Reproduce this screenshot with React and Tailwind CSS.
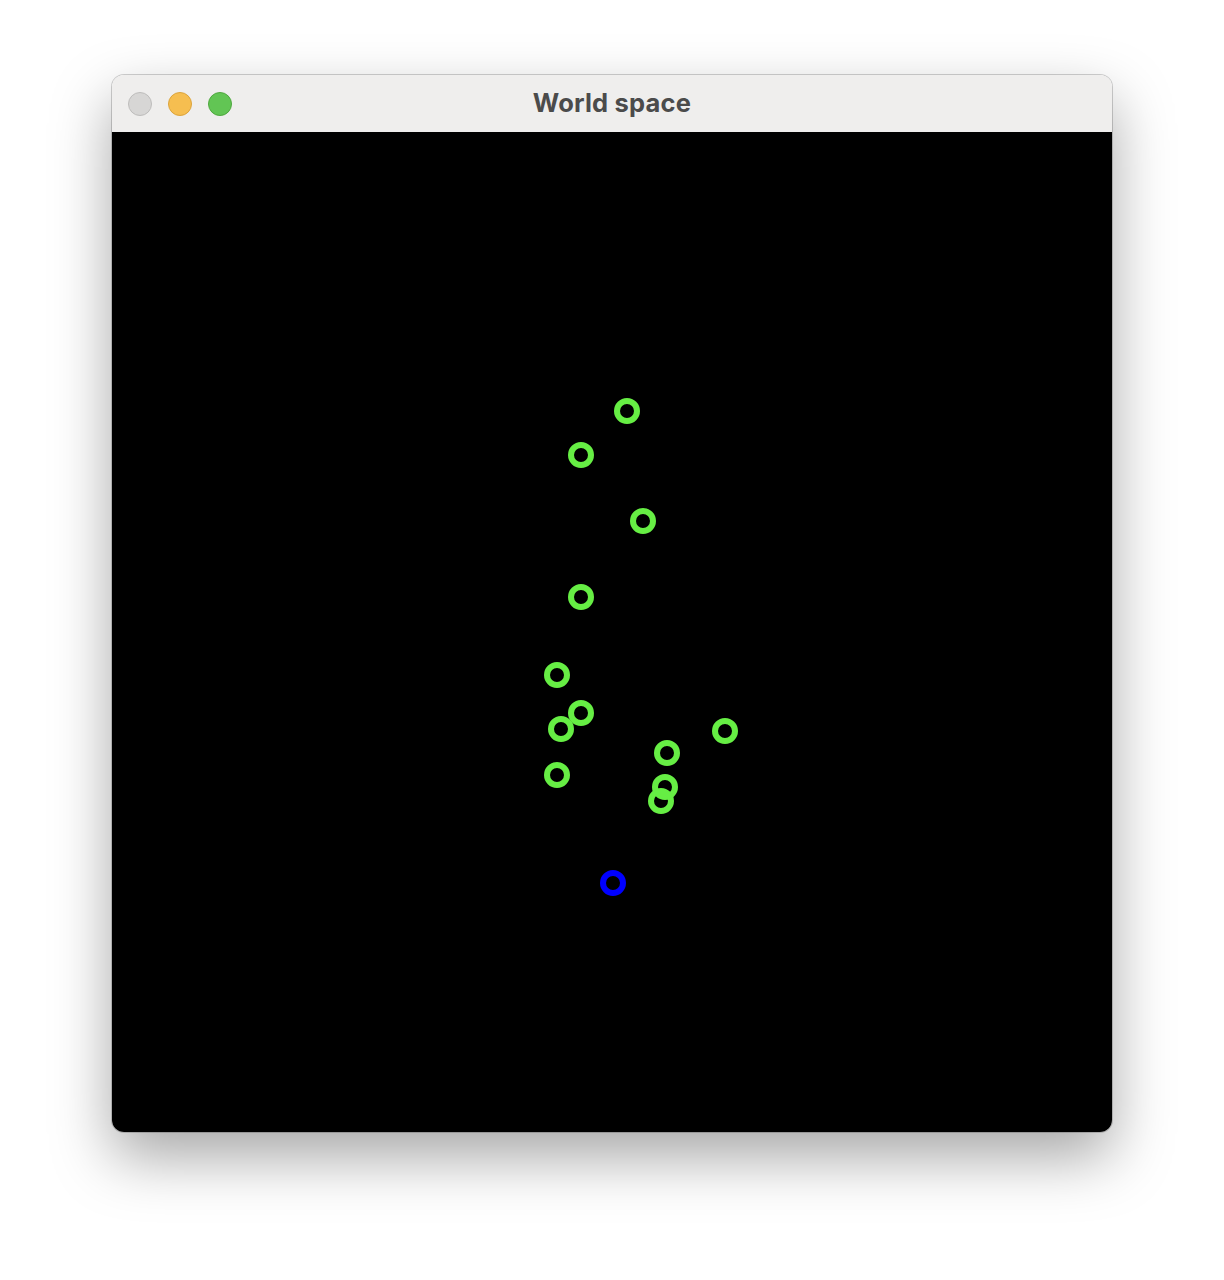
const points = [
  [515, 279],
  [469, 323],
  [531, 389],
  [469, 465],
  [445, 543],
  [469, 581],
  [449, 597],
  [613, 599],
  [555, 621],
  [445, 643],
  [553, 655],
  [549, 669],
];

const player = [501, 751];

const Ring = ({ x, y, color }) => (
  <circle cx={x} cy={y} r="10" fill="none" stroke={color} strokeWidth="6" />
);

export default function App() {
  return (
    <div className="min-h-[1280px] w-[1224px] bg-white pt-[75px] pl-[112px]">
      <div className="w-[1000px] overflow-hidden rounded-[12px] shadow-[0_0_0_1px_rgba(0,0,0,0.18),0_25px_60px_rgba(0,0,0,0.35)]">
        {/* Title bar */}
        <div className="relative flex h-[57px] items-center bg-[#efeeed] px-[16px]">
          <div className="flex gap-[16px]">
            <span className="h-[24px] w-[24px] rounded-full border border-[#bebdbc] bg-[#d7d6d5]" />
            <span className="h-[24px] w-[24px] rounded-full border border-[#dca43c] bg-[#f6be50]" />
            <span className="h-[24px] w-[24px] rounded-full border border-[#4fa83f] bg-[#62c554]" />
          </div>
          <div className="absolute inset-0 flex items-center justify-center font-['Inter',sans-serif] text-[25.5px] font-bold tracking-[0.2px] text-[#4b4b4b]">
            World space
          </div>
        </div>

        {/* Canvas */}
        <svg width="1000" height="1000" viewBox="0 0 1000 1000" className="block bg-black">
          {points.map(([x, y], i) => (
            <Ring key={i} x={x} y={y} color="#66ee44" />
          ))}
          <Ring x={player[0]} y={player[1]} color="#0000ff" />
        </svg>
      </div>
    </div>
  );
}
